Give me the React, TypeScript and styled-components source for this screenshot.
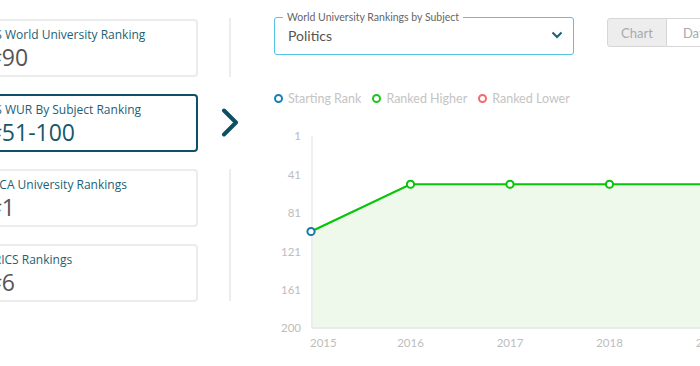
import React from "react";
import styled, { createGlobalStyle } from "styled-components";

const GlobalStyle = createGlobalStyle`
  html, body {
    margin: 0;
    padding: 0;
    width: 700px;
    height: 366px;
    overflow: hidden;
    background: #fff;
  }
  * {
    box-sizing: border-box;
  }
`;

const Page = styled.div`
  display: flex;
  align-items: flex-start;
  margin-left: -26px;
  padding-top: 19px;
  width: 760px;
`;

const CardColumn = styled.div`
  display: flex;
  flex-direction: column;
  gap: 17px;
  width: 224px;
  flex-shrink: 0;
`;

const Card = styled.div<{ $active?: boolean }>`
  height: 58px;
  border: 2px solid ${(p) => (p.$active ? "#0d5068" : "#ececec")};
  border-radius: 4px;
  padding: 5px 10px 0;
  font-family: "Open Sans", sans-serif;
  background: #fff;
`;

const CardTitle = styled.div`
  font-size: 12px;
  line-height: 18px;
  color: #1d6175;
  white-space: nowrap;
`;

const CardValue = styled.div<{ $active?: boolean }>`
  font-size: 23px;
  line-height: 26px;
  margin-left: 1px;
  color: ${(p) => (p.$active ? "#17576c" : "#555")};
  white-space: nowrap;
`;

const Divider = styled.div`
  width: 64px;
  flex-shrink: 0;
  display: flex;
  flex-direction: column;
  align-items: center;
  margin-top: -1px;
`;

const DividerLine = styled.div<{ $h: number }>`
  width: 2px;
  height: ${(p) => p.$h}px;
  background: #ededed;
`;

const Arrow = styled.svg`
  margin: 31px 0 32px;
  display: block;
`;

const Panel = styled.div`
  padding-left: 12px;
  flex: 1;
  margin-top: -2px;
`;

const TopRow = styled.div`
  display: flex;
  align-items: flex-start;
  gap: 33px;
`;

const SelectBox = styled.div`
  position: relative;
  width: 300px;
  height: 38px;
  border: 1px solid #55c3e6;
  border-radius: 3px;
  display: flex;
  align-items: center;
  justify-content: space-between;
  padding: 0 10px 2px 13px;
  font-family: Lato, sans-serif;
`;

const SelectLabel = styled.span`
  position: absolute;
  top: -7px;
  left: 8px;
  padding: 0 4px;
  background: #fff;
  font-size: 10.5px;
  line-height: 12px;
  color: #666;
`;

const SelectValue = styled.span`
  font-size: 14px;
  color: #555;
`;

const Toggle = styled.div`
  display: flex;
  margin-top: 1px;
  font-family: Lato, sans-serif;
`;

const ToggleButton = styled.div<{ $active?: boolean; $first?: boolean }>`
  height: 29px;
  padding: 0 14px;
  width: 60px;
  display: flex;
  align-items: center;
  justify-content: center;
  font-size: 13px;
  color: #aaa;
  background: ${(p) => (p.$active ? "#ededed" : "#fff")};
  border: 1px solid #d6d6d6;
  border-left-width: ${(p) => (p.$first ? "1px" : "0")};
  border-radius: ${(p) => (p.$first ? "3px 0 0 3px" : "0 3px 3px 0")};
`;

const Legend = styled.div`
  display: flex;
  align-items: center;
  gap: 11px;
  margin-top: 36px;
  font-family: Lato, sans-serif;
  font-size: 12.5px;
  color: #c4c4c4;
`;

const LegendItem = styled.div`
  display: flex;
  align-items: center;
  gap: 5px;
`;

const Dot = styled.span<{ $color: string }>`
  width: 9px;
  height: 9px;
  border-radius: 50%;
  border: 2px solid ${(p) => p.$color};
`;

const ChartSvg = styled.svg`
  display: block;
  margin-left: -12px;
  margin-top: 14px;
  font-family: Lato, sans-serif;
`;

const years = [2015, 2016, 2017, 2018, 2019];
const ranks = [100, 51, 51, 51, 51];
const ticks = [1, 41, 81, 121, 161, 200];

const xOf = (i: number) => 49 + i * 99.5;
const yOf = (r: number) => 16 + ((r - 1) * 192) / 199;

const Chart = () => {
  const pts = ranks.map((r, i) => [xOf(i), yOf(r)]);
  const line = pts.map((p) => p.join(",")).join(" ");
  const area = `${pts[0][0]},208 ${line} ${pts[pts.length - 1][0]},208`;
  return (
    <ChartSvg width={470} height={246}>
      <polygon points={area} fill="#eef9ec" />
      <line x1={50} y1={16} x2={50} y2={208} stroke="#eaeaea" strokeWidth={1.5} />
      <line x1={50} y1={208} x2={470} y2={208} stroke="#e6e6e6" strokeWidth={1.5} />
      {ticks.map((t) => (
        <text key={t} x={39} y={yOf(t) + 4} textAnchor="end" fontSize={11.5} fill="#bdbdbd">
          {t}
        </text>
      ))}
      {years.map((y, i) => (
        <text
          key={y}
          x={i === 0 ? 48 : xOf(i)}
          y={227}
          textAnchor={i === 0 ? "start" : "middle"}
          fontSize={11.5}
          fill="#bdbdbd"
        >
          {y}
        </text>
      ))}
      <polyline points={line} fill="none" stroke="#06c406" strokeWidth={2.2} />
      {pts.map(([x, y], i) => (
        <circle
          key={i}
          cx={x}
          cy={y}
          r={3.6}
          fill="#fff"
          stroke={i === 0 ? "#1878a8" : "#06c406"}
          strokeWidth={2}
        />
      ))}
    </ChartSvg>
  );
};

const cards = [
  { title: "QS World University Ranking", value: "#90" },
  { title: "QS WUR By Subject Ranking", value: "#51-100", active: true },
  { title: "EECA University Rankings", value: "#1" },
  { title: "BRICS Rankings", value: "#6" },
];

export default function App() {
  return (
    <>
      <GlobalStyle />
      <Page>
        <CardColumn>
          {cards.map((c) => (
            <Card key={c.title} $active={c.active}>
              <CardTitle>{c.title}</CardTitle>
              <CardValue $active={c.active}>{c.value}</CardValue>
            </Card>
          ))}
        </CardColumn>
        <Divider>
          <DividerLine $h={59} />
          <Arrow width={20} height={29} viewBox="0 0 20 29">
            <path d="M4 2.5 L16 14.5 L4 26.5" fill="none" stroke="#0e4f64" strokeWidth={4} strokeLinecap="round" strokeLinejoin="round" />
          </Arrow>
          <DividerLine $h={132} />
        </Divider>
        <Panel>
          <TopRow>
            <SelectBox>
              <SelectLabel>World University Rankings by Subject</SelectLabel>
              <SelectValue>Politics</SelectValue>
              <svg width={12} height={8} viewBox="0 0 12 8">
                <path d="M1.5 1.5 L6 6 L10.5 1.5" fill="none" stroke="#1d5e72" strokeWidth={2} />
              </svg>
            </SelectBox>
            <Toggle>
              <ToggleButton $active $first>Chart</ToggleButton>
              <ToggleButton>Data</ToggleButton>
            </Toggle>
          </TopRow>
          <Legend>
            <LegendItem>
              <Dot $color="#1a7fb2" />
              Starting Rank
            </LegendItem>
            <LegendItem>
              <Dot $color="#1fc41f" />
              Ranked Higher
            </LegendItem>
            <LegendItem>
              <Dot $color="#f26a6a" />
              Ranked Lower
            </LegendItem>
          </Legend>
          <Chart />
        </Panel>
      </Page>
    </>
  );
}
